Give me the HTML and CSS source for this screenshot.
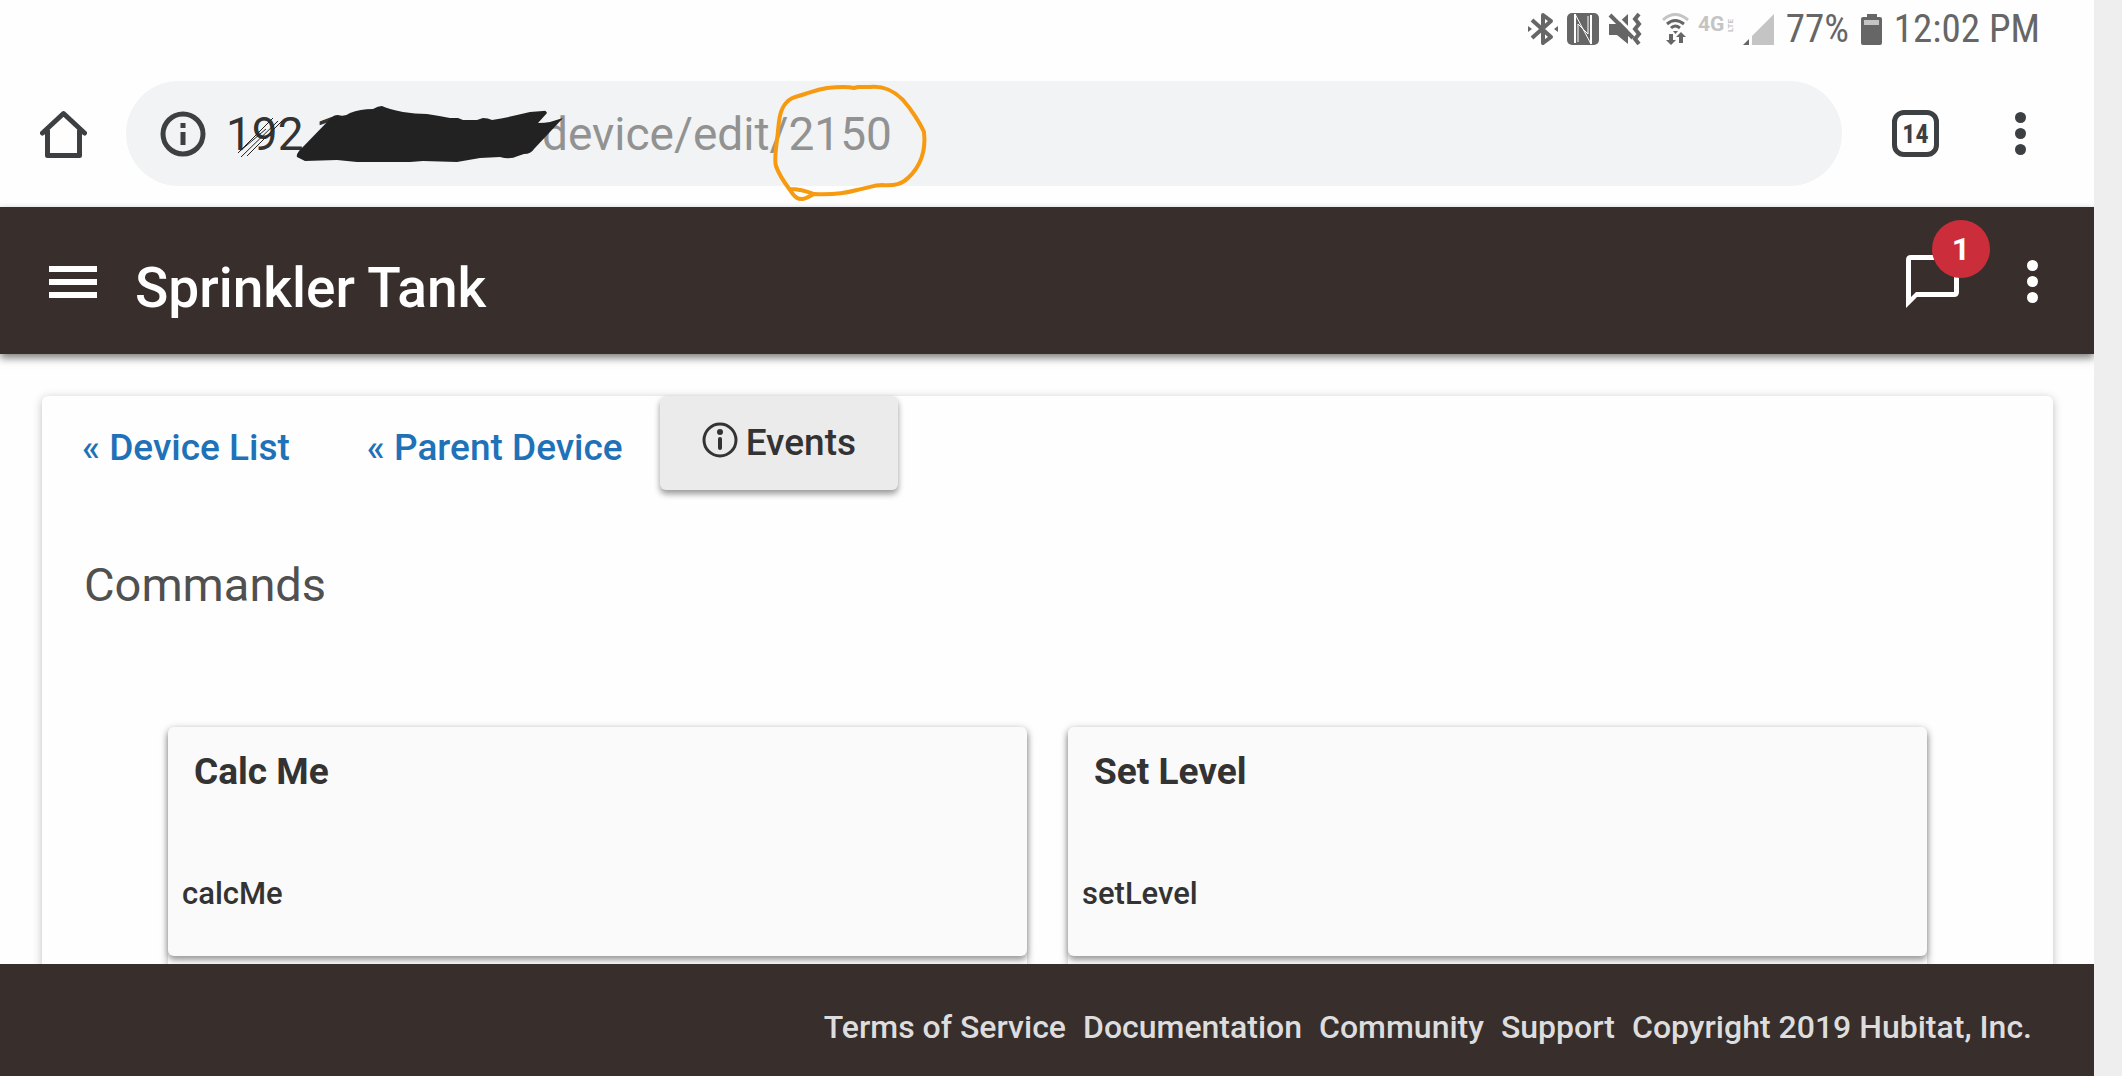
FILE: index.html
```html
<!DOCTYPE html>
<html lang="en">
<head>
<meta charset="utf-8">
<meta name="viewport" content="width=device-width">
<title>Sprinkler Tank</title>
<link rel="stylesheet" href="styles.css">
</head>
<body>
<div class="screen">
  <div class="status">
    <div class="status-icons">
      <svg width="30" height="34" viewBox="0 0 30 34" fill="none" stroke="currentColor" stroke-width="4"><path d="M4 8 23 25 15 31V3L23 9 4 26" stroke-linejoin="round"/><path d="M0 14l4 3-4 3zM30 14l-4 3 4 3z" fill="currentColor" stroke="none"/></svg>
      <svg width="32" height="34" viewBox="0 0 32 34"><rect y="1" width="32" height="32" rx="5" fill="currentColor"/><path d="M8 2V31M24 3V32" stroke="#fff" stroke-width="2"/><path d="M8 2 24 32M11 30V12L21 22V4" fill="none" stroke="#fff" stroke-width="1"/></svg>
      <svg width="34" height="34" viewBox="0 0 34 34"><path d="M1 12H9L20 2V32L9 23H1Z" fill="currentColor"/><path d="M4 0 27 23" stroke="#fff" stroke-width="3"/><path d="M2 3 25 26M31 2 27 7 31 12 27 17 31 22 27 27 31 32" fill="none" stroke="currentColor" stroke-width="4"/></svg>
    </div>
    <div class="status-icons">
      <svg width="27" height="34" viewBox="0 0 27 34" fill="none" stroke="currentColor" stroke-width="3"><path d="M1 8Q13 -3 26 8" stroke="#c4c4c4"/><path d="M5 12Q13 5 22 12M9 16Q13 12 18 16"/><path d="M11 19h5l-2.500 3zM7 22h4v6h3l-5 5-5-5h3zM17 31v-6h-3l5-5 5 5h-3v6z" fill="currentColor" stroke="none"/></svg>
      <svg class="network" width="36" height="34" viewBox="0 0 36 34" fill="#c4c4c4"><text x="0" y="19" font-size="21">4G</text><text font-size="8" transform="translate(35 20) rotate(-90)">LTE</text></svg>
      <svg width="31" height="34" viewBox="0 0 31 34"><path d="M31 2V33H9V24Z" fill="#c4c4c4"/><path d="M0 33 6 27V33Z" fill="currentColor"/></svg>
    </div>
    <div class="status-text">
      <span>77%</span>
      <svg width="21" height="34" viewBox="0 0 21 34"><path d="M6 2h10v3h3q2 0 2 2V31q0 2-2 2H2q-2 0-2-2V7q0-2 2-2H6Z" fill="currentColor"/><path d="M3 8H18V13H3Z" fill="#c4c4c4"/></svg>
      <time>12:02 PM</time>
    </div>
  </div>

  <div class="browser">
    <button class="plain" aria-label="Home"><svg width="47" height="48" viewBox="40 109 47 48" fill="none" stroke="currentColor" stroke-width="5" stroke-linecap="round" stroke-linejoin="round"><path d="M42.500 132 63.500 112.500 84.500 132M47.500 130V154.500H79.500V130"/></svg></button>
    <div class="omnibox">
      <svg width="46" height="46" viewBox="0 0 46 46"><circle cx="23" cy="23" r="20" fill="none" stroke="currentColor" stroke-width="5"/><path d="M20.500 12H25.500V17H20.500ZM20.500 21H25.500V34H20.500Z" fill="currentColor"/></svg>
      <label class="host" for="address">192.1</label>
      <input class="path" id="address" type="text" value="device/edit/2150">
      <svg class="markup" width="720" height="130" viewBox="216 76 720 130" fill="none" aria-hidden="true">
        <path d="M238 153 273 118M241 157 278 121M247 156 282 121M240 151 266 129" stroke="#222" stroke-width="1"/>
        <path d="M297 157Q296 155 299 151L330 119Q333 115 338 115 345 117 350 113 360 109 373 109 378 106 382 106 388 109 403 112 415 114 427 114 440 116 450 118L458 118 463 120H477L483 118Q488 118 492 120 505 118 517 115L530 112 543 111Q546 110 547 113L538 123Q545 123 550 122L563 118 534 149Q531 154 524 154L518 156Q510 160 500 157L480 158 457 162 423 161 410 162H357L337 160 305 161Z" fill="#222"/>
        <path d="M805 94C796 97 791 97 786 103 778 112 779 126 777 140 775 155 775 163 776 166 779 175 784 182 790 190 795 198 798 199 802 199 807 199 811 195 814 194 804 190 795 189 789 189M814 194C832 195 846 193 857 190 868 188 874 185 882 185 895 186 902 184 908 178 921 166 926 150 924 132 921 125 912 110 903 100 892 89 882 86 870 87L858 87 854 88C846 86 836 87 827 88 815 90 812 92 805 94" stroke="#f79a10" stroke-width="4" stroke-linejoin="round"/>
      </svg>
    </div>
    <button class="tabs" aria-label="14 open tabs">14</button>
    <button class="plain dots" aria-label="Browser menu"><svg width="11" height="43" viewBox="0 0 11 43" fill="currentColor"><circle cx="5.500" cy="5.500" r="5.500"/><circle cx="5.500" cy="21.500" r="5.500"/><circle cx="5.500" cy="37.500" r="5.500"/></svg></button>
  </div>

  <header class="appbar">
    <button class="plain" aria-label="Open navigation"><svg width="48" height="34" viewBox="0 0 48 34"><path d="M0 4H48M0 17H48M0 30H48" stroke="currentColor" stroke-width="6"/></svg></button>
    <h1 class="title">Sprinkler Tank</h1>
    <button class="plain messages" aria-label="Messages"><svg width="53" height="54" viewBox="0 0 53 54"><path fill-rule="evenodd" fill="currentColor" d="M5 0H48Q53 0 53 5V37Q53 42 48 42H11L0 53V5Q0 0 5 0ZM5 5V42L10 37H48V5Z"/></svg><span class="badge">1</span></button>
    <button class="plain" aria-label="More"><svg width="11" height="43" viewBox="0 0 11 43" fill="currentColor"><circle cx="5.500" cy="5.500" r="5.500"/><circle cx="5.500" cy="21.500" r="5.500"/><circle cx="5.500" cy="37.500" r="5.500"/></svg></button>
  </header>

  <main class="content">
    <section class="panel">
      <nav class="links">
        <a class="link" href="#devices">« Device List</a>
        <a class="link" href="#parent">« Parent Device</a>
        <button class="events"><svg width="36" height="44" viewBox="0 0 36 44"><circle cx="18" cy="19" r="16" fill="none" stroke="currentColor" stroke-width="3"/><circle cx="18" cy="11" r="3" fill="currentColor"/><path d="M18 18V27" stroke="currentColor" stroke-width="4" stroke-linecap="round"/></svg>Events</button>
      </nav>
      <h2 class="heading">Commands</h2>
      <div class="commands">
        <article class="slot"><div class="command"><h3 class="name">Calc Me</h3><p class="method">calcMe</p></div></article>
        <article class="slot"><div class="command"><h3 class="name">Set Level</h3><p class="method">setLevel</p></div></article>
      </div>
    </section>
  </main>

  <footer class="footer">
    <a href="#terms">Terms of Service</a>
    <a href="#docs">Documentation</a>
    <a href="#community">Community</a>
    <a href="#support">Support</a>
    <span>Copyright 2019 Hubitat, Inc.</span>
  </footer>
</div>
</body>
</html>
```
FILE: styles.css
```css
* { box-sizing: border-box; }

body {
  margin: 0;
  padding-right: 28px;
  background: #eee;
  color: #333;
  font-family: Roboto, "Liberation Sans", sans-serif;
}

svg { display: block; flex: none; }
h1, h2, h3, p { margin: 0; }
button { font: inherit; cursor: pointer; }
.plain { padding: 0; border: 0; background: none; color: inherit; }

.screen {
  display: flex;
  flex-direction: column;
  height: 100vh;
  overflow: hidden;
  background: #fefefe;
}

/* Phone status bar */
.status {
  display: flex;
  flex: none;
  justify-content: flex-end;
  align-items: center;
  height: 54px;
  padding: 4px 54px 0 0;
  color: #666;
}
.status-icons { display: flex; gap: 9px; margin-right: 20px; }
.status-icons + .status-icons { margin-right: 12px; }
.network { overflow: visible; font-weight: 700; }
.status-text {
  display: flex;
  align-items: center;
  gap: 12px;
  font-family: "Roboto Condensed", Roboto, sans-serif;
  font-size: 39px;
  line-height: 50px;
}

/* Browser toolbar */
.browser {
  display: flex;
  flex: none;
  align-items: center;
  height: 153px;
  padding: 6px 68px 0 40px;
  color: #3c4043;
}
.omnibox {
  position: relative;
  display: flex;
  flex: 1;
  align-items: center;
  height: 105px;
  margin: 0 50px 0 39px;
  padding-left: 34px;
  border-radius: 53px;
  background: #f1f3f4;
  font-size: 46px;
}
.host { width: 314px; padding-left: 20px; color: #333; }
.host, .path { line-height: 56px; }
.path {
  flex: 1;
  min-width: 0;
  margin-left: 22px;
  padding: 0;
  border: 0;
  outline: 0;
  background: none;
  color: #929292;
  font: inherit;
}
.markup { position: absolute; top: -5px; left: 90px; }
.tabs {
  width: 47px;
  height: 47px;
  padding: 0;
  border: 5px solid #3c4043;
  border-radius: 12px;
  background: none;
  color: #3c4043;
  font-family: "Roboto Condensed", Roboto, sans-serif;
  font-size: 26px;
  font-weight: 700;
}
.dots { margin-left: 76px; }

/* App header */
.appbar {
  position: relative;
  display: flex;
  flex: none;
  align-items: center;
  height: 147px;
  padding: 2px 56px 0 49px;
  background: #382e2c;
  box-shadow: 0 4px 8px rgba(0, 0, 0, .5);
  color: #fff;
}
.title {
  flex: 1;
  margin-left: 38px;
  padding-top: 12px;
  font-size: 55px;
  font-weight: 500;
}
.messages { position: relative; margin-right: 68px; }
.badge {
  position: absolute;
  top: -35px;
  left: 26px;
  width: 58px;
  height: 58px;
  border-radius: 50%;
  background: #cb2d3b;
  font-size: 32px;
  font-weight: 700;
  line-height: 58px;
  text-align: center;
}

/* Device page */
.content {
  flex: 1;
  min-height: 0;
  overflow: hidden;
  padding: 42px 41px 0 42px;
}
.panel {
  min-height: 120%;
  border-radius: 6px;
  box-shadow: 0 2px 10px rgba(0, 0, 0, .25);
}
.links { display: flex; align-items: flex-start; font-size: 37px; font-weight: 500; }
.link {
  padding: 31px 37px 31px 40px;
  color: #1f72b8;
  line-height: 42px;
  text-decoration: none;
}
.events {
  display: flex;
  align-items: center;
  gap: 8px;
  height: 94px;
  padding: 0 42px 1px;
  border: 0;
  border-radius: 6px;
  background: #ebebeb;
  box-shadow: 0 4px 6px rgba(0, 0, 0, .4);
  color: #333;
}
.heading {
  margin: 57px 42px 0;
  color: #505050;
  font-size: 47px;
  font-weight: 400;
  line-height: 56px;
}
.commands {
  display: grid;
  grid-template-columns: 1fr 1fr;
  gap: 41px;
  margin: 114px 126px 0;
}
.slot { height: 280px; border-radius: 6px; box-shadow: 0 2px 8px rgba(0, 0, 0, .25); }
.command {
  height: 229px;
  padding: 24px 14px;
  border-radius: 6px;
  background: #fafafa;
  box-shadow: 0 4px 6px rgba(0, 0, 0, .4);
}
.name { padding-left: 12px; font-size: 37px; font-weight: 700; line-height: 42px; }
.method { margin-top: 83px; font-size: 31px; font-weight: 500; line-height: 36px; }

.footer {
  display: flex;
  flex: none;
  justify-content: flex-end;
  align-items: center;
  gap: 17px;
  height: 112px;
  padding: 14px 62px 0 0;
  background: #382e2c;
  color: #ddd;
  font-size: 32px;
  font-weight: 500;
}
.footer a { color: inherit; text-decoration: none; }
```
